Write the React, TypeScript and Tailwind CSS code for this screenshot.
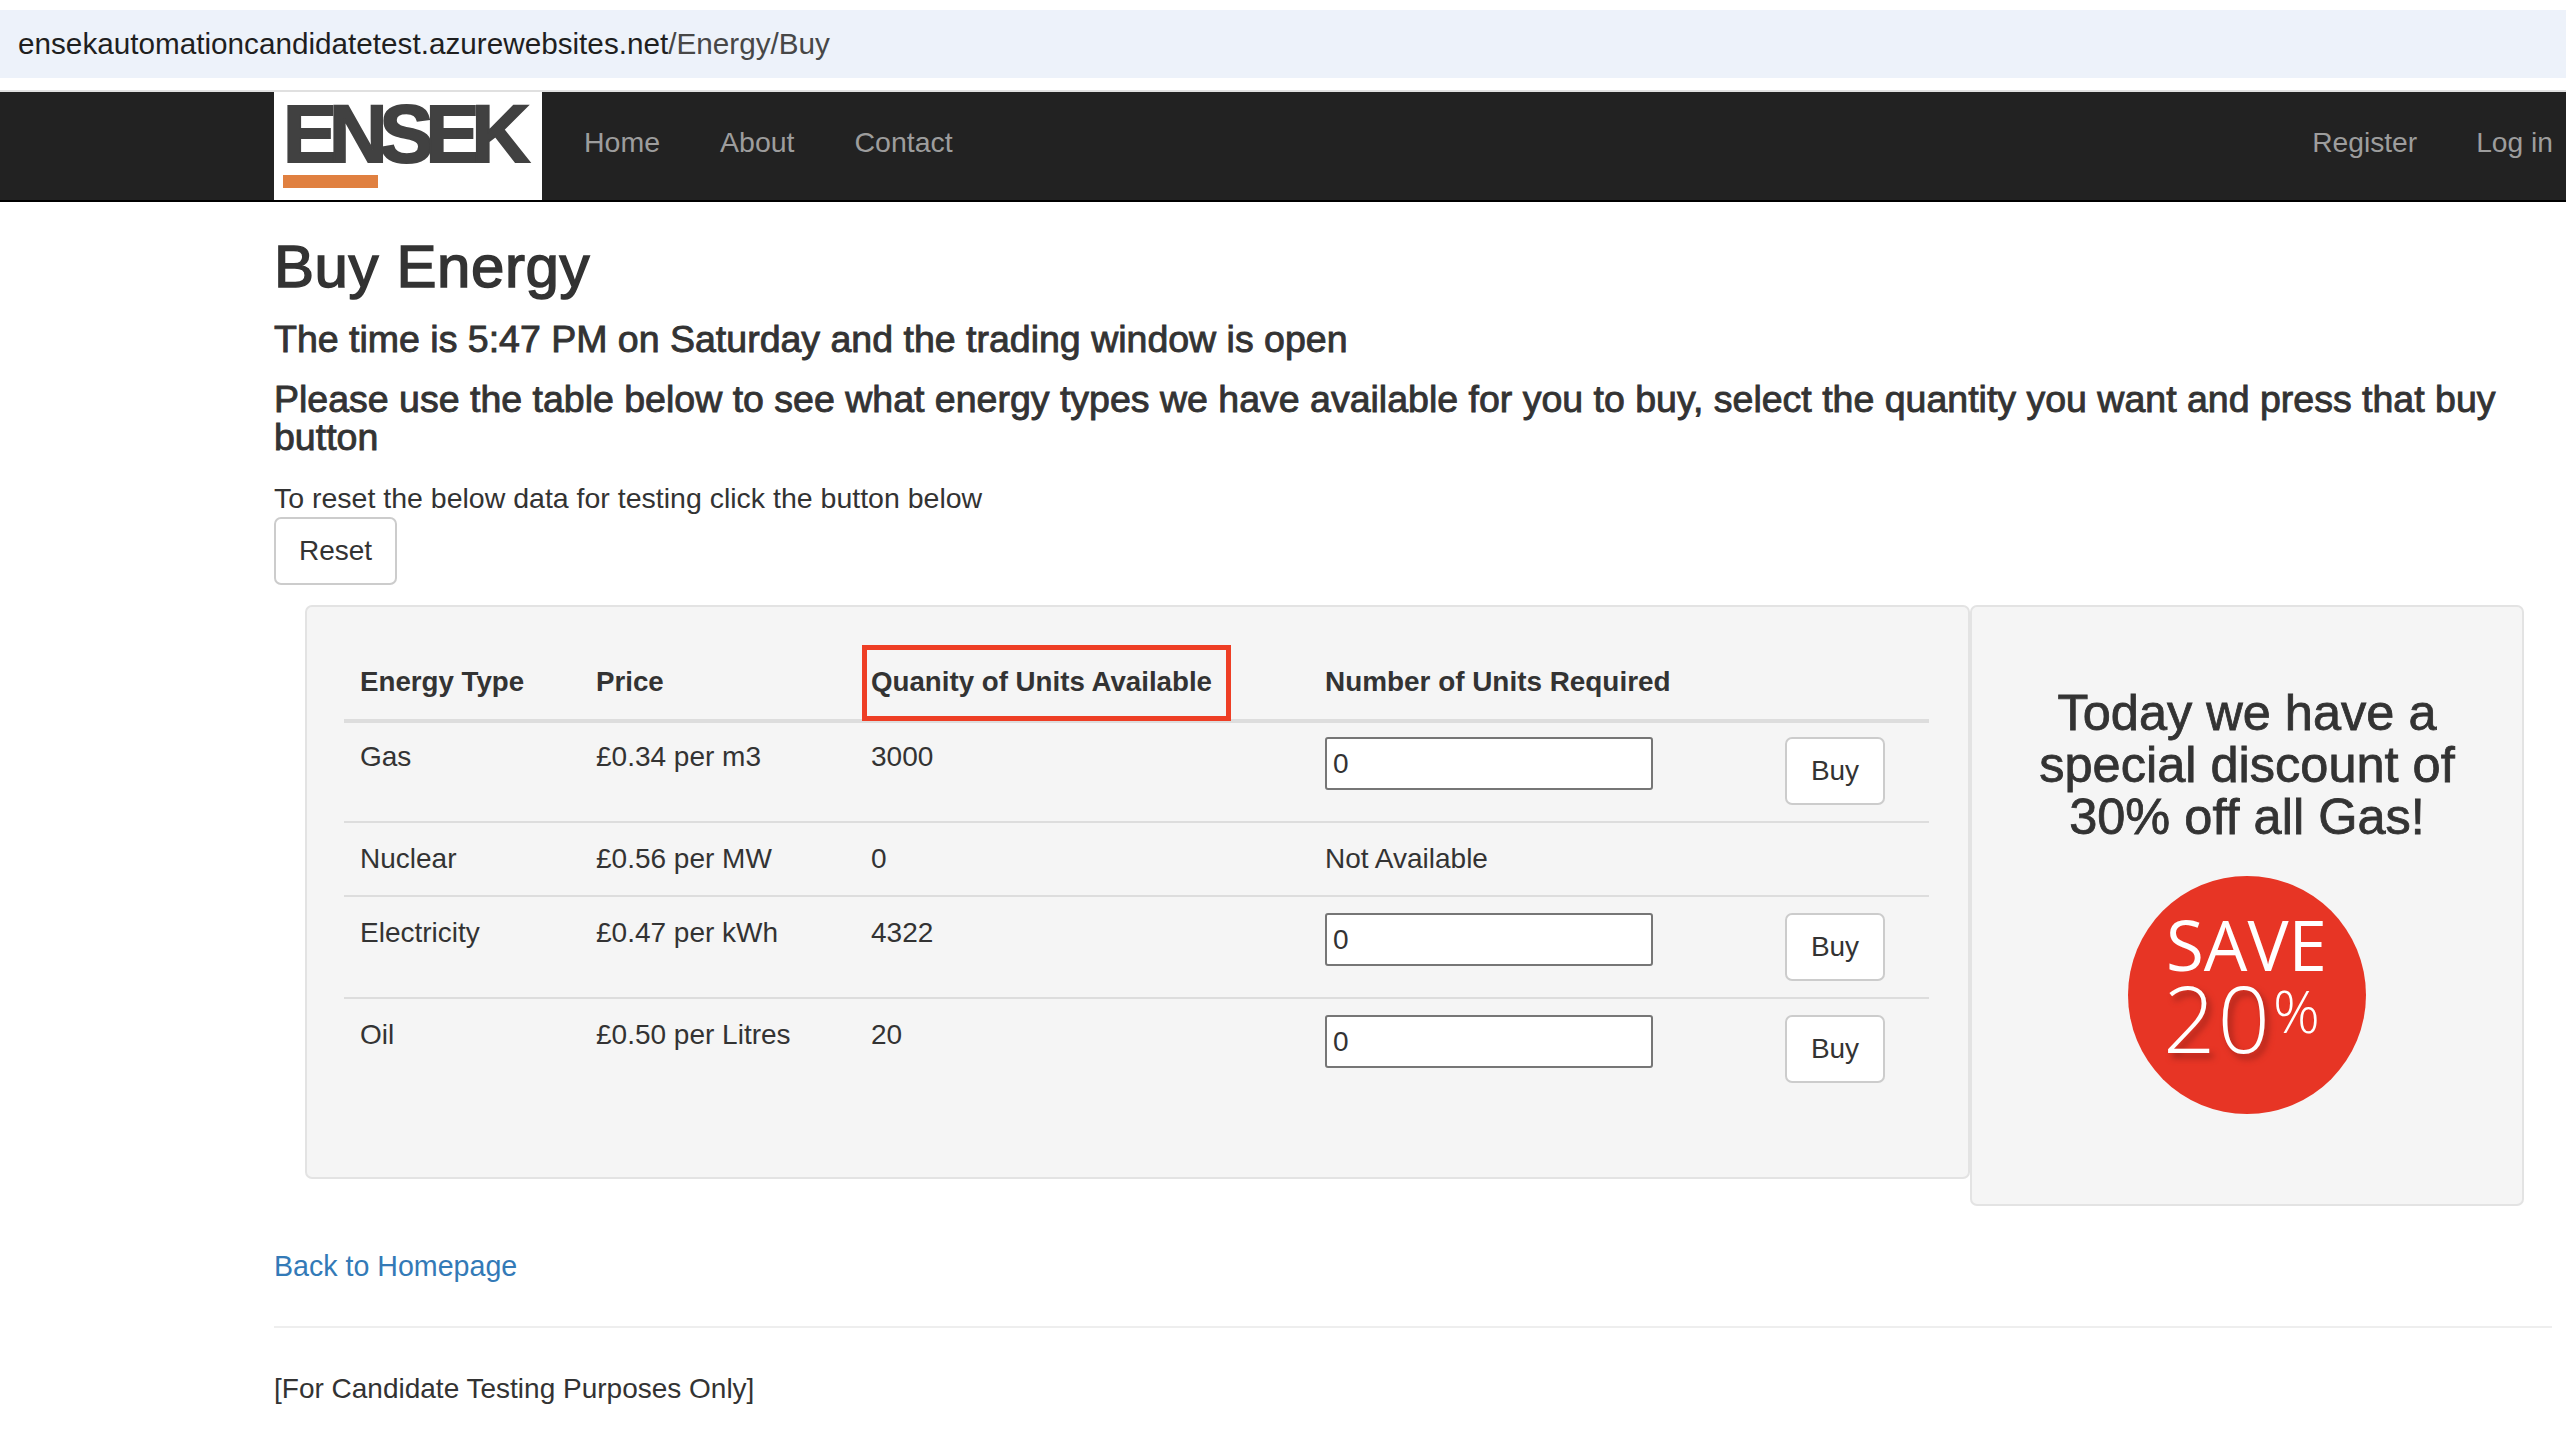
const rows = [
  { name: 'Gas', price: '£0.34 per m3', qty: '3000', buy: true, pad: 'pt-[14px]' },
  { name: 'Nuclear', price: '£0.56 per MW', qty: '0', buy: false, pad: 'pt-[16px]' },
  { name: 'Electricity', price: '£0.47 per kWh', qty: '4322', buy: true, pad: 'pt-[16px]' },
  { name: 'Oil', price: '£0.50 per Litres', qty: '20', buy: true, pad: 'pt-[16px]' },
]

function Logo() {
  return (
    <div className="w-[268px] h-[108px] bg-white shrink-0 flex flex-col pl-[9px]">
      <div className="mt-[2px] h-[81px] text-[81px] leading-[81px] font-bold tracking-[-8px] text-[#414141] [-webkit-text-stroke:2px_#414141] whitespace-nowrap">
        ENSEK
      </div>
      <div className="w-[95px] h-[13px] bg-[#e08040]" />
    </div>
  )
}

// the badge is a picture in the original, so it stays one here
function SaveBadge() {
  return (
    <svg width="238" height="238" viewBox="0 0 238 238" className="block mt-[33px] mx-auto font-['Open_Sans',sans-serif]">
      <circle cx="119" cy="119" r="119" fill="#e73525" />
      <text x="38" y="95" fontSize="69" fill="#fff">SAVE</text>
      <text x="35" y="177" fontSize="92" fontWeight="300" letterSpacing="2" fill="#fff" className="drop-shadow-[4px_5px_3px_#a3241b]">20</text>
      <text x="145" y="157" fontSize="58" fontWeight="300" fill="#fff">%</text>
    </svg>
  )
}

export default function App() {
  return (
    <div className="min-h-screen bg-white text-[#333] text-[28px] font-['Liberation_Sans',Arial,sans-serif]">
      <div className="pt-[10px]">
        <div className="h-[68px] bg-[#edf2fa] pl-[18px] flex items-center text-[29.7px] text-[#1f1f1f]">
          ensekautomationcandidatetest.azurewebsites.net<span className="text-[#474747]">/Energy/Buy</span>
        </div>
      </div>

      <nav className="mt-[12px] h-[112px] bg-[#222] border-t-2 border-t-[#e0e0e0] border-b-2 border-b-black pl-[274px] pr-[13px] flex text-[#9d9d9d] text-[28.5px]">
        <Logo />
        <div className="ml-[42px] flex gap-[60px] items-center pb-[7px]">
          <a>Home</a>
          <a>About</a>
          <a>Contact</a>
        </div>
        <div className="ml-auto flex gap-[59px] items-center pb-[7px] text-[28.2px]">
          <a>Register</a>
          <a>Log in</a>
        </div>
      </nav>

      <main className="pl-[274px] pr-[14px]">
        <h1 className="mt-[33px] text-[60px] leading-[64px] tracking-[0.6px] [-webkit-text-stroke:1.5px_#333]">Buy Energy</h1>
        <h4 className="mt-[21px] text-[37.5px] leading-[38px] [-webkit-text-stroke:0.9px_#333]">The time is 5:47 PM on Saturday and the trading window is open</h4>
        <h4 className="mt-[22px] text-[37.5px] leading-[38px] [-webkit-text-stroke:0.9px_#333]">
          Please use the table below to see what energy types we have available for you to buy, select the quantity you want and press that buy button
        </h4>
        <p className="mt-[22px] leading-[40px] text-[28.5px]">To reset the below data for testing click the button below</p>
        <button className="-mt-[1px] block w-[123px] h-[68px] rounded-[7px] border-2 border-[#ccc] bg-white text-[#333]">Reset</button>

        <div className="mt-[20px] flex items-start">
          <div className="ml-[31px] w-[1665px] h-[574px] bg-[#f5f5f5] border-2 border-[#e3e3e3] rounded-[7px] pl-[37px] pt-[38px]">
            <table className="w-[1585px] table-fixed border-collapse text-left">
              <colgroup>
                <col className="w-[236px]" />
                <col className="w-[275px]" />
                <col className="w-[454px]" />
                <col className="w-[460px]" />
                <col className="w-[160px]" />
              </colgroup>
              <thead>
                <tr className="h-[76px] border-b-4 border-[#ddd]">
                  <th className="pl-[16px] pb-[16px] align-bottom font-bold text-[27.7px]">Energy Type</th>
                  <th className="pl-[16px] pb-[16px] align-bottom font-bold text-[27.7px]">Price</th>
                  <th className="relative pl-[16px] pb-[16px] align-bottom font-bold text-[27.7px] whitespace-nowrap">
                    Quanity of Units Available
                    <div className="absolute left-[7px] top-0 w-[369px] h-[76px] border-[5px] border-[#ee3e25]" />
                  </th>
                  <th className="pl-[16px] pb-[16px] align-bottom font-bold text-[27.9px]">Number of Units Required</th>
                  <th />
                </tr>
              </thead>
              <tbody>
                {rows.map((row, i) => (
                  <tr key={row.name} className={i < 3 ? 'border-b-2 border-[#ddd]' : ''}>
                    <td className={`pl-[16px] ${row.pad} align-top leading-[40px]`}>{row.name}</td>
                    <td className={`pl-[16px] ${row.pad} align-top leading-[40px]`}>{row.price}</td>
                    <td className={`pl-[16px] ${row.pad} align-top leading-[40px]`}>{row.qty}</td>
                    <td className={`pl-[16px] ${row.pad} align-top leading-[40px]`}>
                      {row.buy ? (
                        <input
                          readOnly
                          value="0"
                          className="block w-[328px] h-[53px] mb-[31px] bg-white border-2 border-[#767676] rounded-[3px] px-[6px] text-[#333]"
                        />
                      ) : (
                        <div className="pb-[16px]">Not Available</div>
                      )}
                    </td>
                    <td className={`pl-[16px] ${row.pad} align-top`}>
                      {row.buy && (
                        <button className="block w-[100px] h-[68px] rounded-[7px] border-2 border-[#ccc] bg-white text-[#333]">Buy</button>
                      )}
                    </td>
                  </tr>
                ))}
              </tbody>
            </table>
          </div>

          <div className="w-[554px] h-[601px] bg-[#f5f5f5] border-2 border-[#e3e3e3] rounded-[7px] pt-[80px]">
            <h3 className="mx-auto w-[500px] text-center text-[50.5px] leading-[52px] [-webkit-text-stroke:0.8px_#333]">
              Today we have a special discount of 30% off all Gas!
            </h3>
            <SaveBadge />
          </div>
        </div>

        <a className="block mt-[40px] leading-[40px] text-[28.6px] text-[#337ab7]">Back to Homepage</a>
        <hr className="mt-[40px] border-t-2 border-[#eee]" />
        <p className="mt-[41px] leading-[40px]">[For Candidate Testing Purposes Only]</p>
      </main>
    </div>
  )
}
